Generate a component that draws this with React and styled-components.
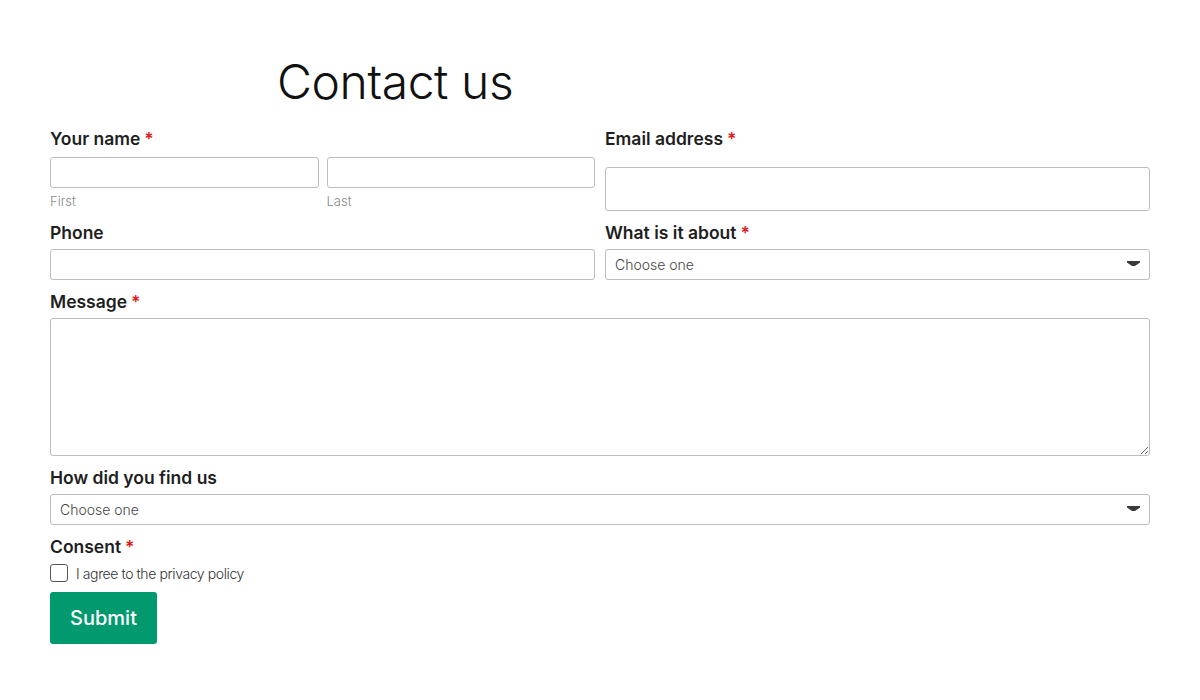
import React from 'react';
import styled, { createGlobalStyle } from 'styled-components';

const GlobalStyle = createGlobalStyle`
	* { box-sizing: border-box; }
	body {
		margin: 0;
		background: #fff;
		font-family: Inter, 'Noto Sans', sans-serif;
		color: #1e1e1e;
	}
`;

const Page = styled.div`
	width: 1100px;
	margin: 0 auto;
	padding-top: 54px;
`;

const Title = styled.h1`
	margin: 0 0 16px 0;
	padding-left: 227px;
	font-size: 48px;
	font-weight: 300;
	line-height: 56px;
	letter-spacing: -0.4px;
	color: #111;
`;

const Form = styled.form`
	display: flex;
	flex-direction: column;
	gap: 9px;
`;

const Row = styled.div`
	display: grid;
	grid-template-columns: 1fr 1fr;
	column-gap: 10px;
`;

const Field = styled.div`
	display: flex;
	flex-direction: column;
`;

const Label = styled.label`
	display: block;
	height: 24px;
	line-height: 26px;
	margin-bottom: ${(p) => p.$gap || 5}px;
	font-size: 17.5px;
	font-weight: 600;
	color: #1e1e1e;
`;

const Star = styled.span`
	color: #e01b1b;
	margin-left: 4px;
`;

const NameGrid = styled.div`
	display: grid;
	grid-template-columns: 1fr 1fr;
	column-gap: 8px;
`;

const Input = styled.input`
	display: block;
	width: 100%;
	height: ${(p) => p.$h || 31}px;
	margin-top: ${(p) => p.$mt || 0}px;
	border: 1px solid #bdbdbd;
	border-radius: 3px;
	padding: 0 10px;
	font: inherit;
	font-size: 14px;
	outline: none;
`;

const SubLabel = styled.span`
	display: block;
	margin-top: 4px;
	font-size: 13px;
	font-weight: 300;
	color: #8a8a8a;
	line-height: 18px;
`;

const SelectWrap = styled.div`
	position: relative;
`;

const Select = styled.select`
	display: block;
	width: 100%;
	height: 31px;
	border: 1px solid #bdbdbd;
	border-radius: 3px;
	padding: 0 30px 0 9px;
	background: #fff;
	font-family: inherit;
	font-size: 14px;
	font-weight: 300;
	color: #444;
	appearance: none;
	outline: none;
`;

const Arrow = styled.svg`
	position: absolute;
	right: 10px;
	top: 12px;
	pointer-events: none;
`;

const TextArea = styled.textarea`
	display: block;
	width: 100%;
	height: 138px;
	border: 1px solid #bdbdbd;
	border-radius: 3px;
	padding: 8px 10px;
	font: inherit;
	resize: vertical;
	outline: none;
`;

const CheckRow = styled.label`
	display: flex;
	align-items: center;
	gap: 8px;
	font-size: 14px;
	font-weight: 300;
	color: #333;
	letter-spacing: -0.4px;
`;

const Check = styled.input`
	appearance: none;
	margin: 0;
	width: 18px;
	height: 18px;
	border: 1px solid #555;
	border-radius: 3px;
	background: #fff;
`;

const Submit = styled.button`
	align-self: flex-start;
	margin-top: 1px;
	width: 107px;
	height: 52px;
	border: none;
	border-radius: 3px;
	background: #009a6e;
	color: #fff;
	font-family: inherit;
	font-size: 20px;
	font-weight: 500;
	cursor: pointer;
`;

const Dropdown = ({ id }) => (
	<SelectWrap>
		<Select id={id} defaultValue=''>
			<option value=''>Choose one</option>
		</Select>
		<Arrow width='13' height='5' viewBox='0 0 13 5'>
			<path d='M0 0 H13 V1.5 L8 5 H5 L0 1.5 Z' fill='#3a3a3a' />
		</Arrow>
	</SelectWrap>
);

const App = () => {
	return (
		<>
			<GlobalStyle />
			<Page>
				<Title>Contact us</Title>
				<Form onSubmit={(e) => e.preventDefault()}>
					<Row>
						<Field>
							<Label $gap={7}>
								Your name<Star>*</Star>
							</Label>
							<NameGrid>
								<div>
									<Input />
									<SubLabel>First</SubLabel>
								</div>
								<div>
									<Input />
									<SubLabel>Last</SubLabel>
								</div>
							</NameGrid>
						</Field>
						<Field>
							<Label $gap={7}>
								Email address<Star>*</Star>
							</Label>
							<Input type='email' $h={44} $mt={10} />
						</Field>
					</Row>
					<Row>
						<Field>
							<Label>Phone</Label>
							<Input type='tel' />
						</Field>
						<Field>
							<Label>
								What is it about<Star>*</Star>
							</Label>
							<Dropdown id='about' />
						</Field>
					</Row>
					<Field>
						<Label>
							Message<Star>*</Star>
						</Label>
						<TextArea />
					</Field>
					<Field>
						<Label>How did you find us</Label>
						<Dropdown id='source' />
					</Field>
					<Field>
						<Label $gap={6}>
							Consent<Star>*</Star>
						</Label>
						<CheckRow>
							<Check type='checkbox' />
							I agree to the privacy policy
						</CheckRow>
					</Field>
					<Submit type='submit'>Submit</Submit>
				</Form>
			</Page>
		</>
	);
};

export default App;
